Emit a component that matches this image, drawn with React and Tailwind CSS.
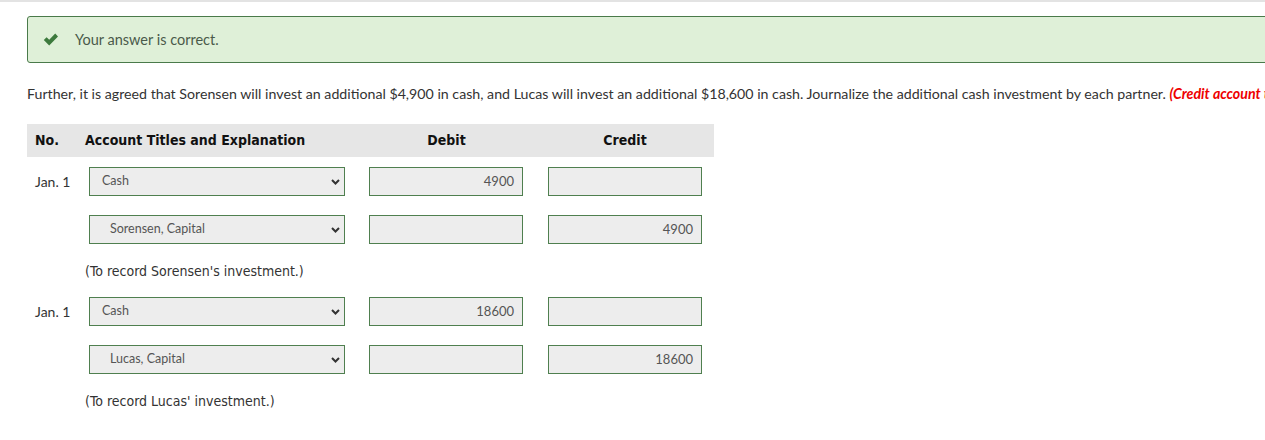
const entries = [
  {
    lines: [
      { date: 'Jan. 1', account: 'Cash', indent: false, debit: '4900', credit: '' },
      { date: '', account: 'Sorensen, Capital', indent: true, debit: '', credit: '4900' },
    ],
    note: "(To record Sorensen's investment.)",
  },
  {
    lines: [
      { date: 'Jan. 1', account: 'Cash', indent: false, debit: '18600', credit: '' },
      { date: '', account: 'Lucas, Capital', indent: true, debit: '', credit: '18600' },
    ],
    note: "(To record Lucas' investment.)",
  },
];

const Chevron = () => (
  <svg width="9" height="6" viewBox="0 0 9 6" className="text-[#333]">
    <path d="M1 1l3.5 3.5L8 1" stroke="currentColor" strokeWidth="2" fill="none" />
  </svg>
);

const AmountBox = ({ value }) => (
  <div className="mx-[12px] h-[29px] w-[154px] border border-[#4f7f4f] bg-[#ededed] px-[8px] flex items-center justify-end text-[13px] text-[#555]">
    {value}
  </div>
);

const App = () => {
  return (
    <div className="w-[1265px] h-[440px] overflow-hidden bg-white border-t-2 border-[#e3e3e3] font-['Lato','Liberation_Sans',sans-serif] text-[#333]">
      <div className="pl-[27px] pt-[14px]">
        <div className="h-[47px] w-[1300px] rounded-[3px] border border-[#4a7a4a] bg-[#dff0d8] flex items-center">
          <svg width="16" height="13" viewBox="0 0 16 13" className="ml-[15px]">
            <path d="M0.8 7l2.8-2.8L6.2 6.8 12.2 0.6 15 3.4 6.2 12.4z" fill="#3d7a3d" />
          </svg>
          <span className="ml-[16px] text-[14.5px] text-[#4a5a4a]">Your answer is correct.</span>
        </div>

        <p className="mt-[20px] whitespace-nowrap text-[14.2px] text-[#333]">
          Further, it is agreed that Sorensen will invest an additional $4,900 in cash, and Lucas will invest an additional $18,600 in cash. Journalize the additional cash investment by each partner.{' '}
          <span className="font-bold italic text-[#ee0000]">(Credit account titles are automatically indented when amount is entered. Do not indent manually.)</span>
        </p>

        <div className="mt-[20px] w-[687px]">
          <div className="flex h-[33px] items-center bg-[#e6e6e6] font-['DejaVu_Sans_Condensed','DejaVu_Sans',sans-serif] text-[14px] font-bold text-[#111]">
            <div className="w-[58px] pl-[8px]">No.</div>
            <div className="w-[272px]">Account Titles and Explanation</div>
            <div className="w-[179px] text-center">Debit</div>
            <div className="w-[178px] text-center">Credit</div>
          </div>

          <div className="pt-[10px]">
            {entries.map((entry, i) => (
              <div key={i}>
                <div className="flex flex-col gap-[19px]">
                  {entry.lines.map((r, j) => (
                    <div key={j} className="flex items-center h-[29px]">
                      <div className="w-[58px] pl-[8px] text-[14px] text-[#333]">{r.date}</div>
                      <div className="w-[272px]">
                        <div className="ml-[4px] h-[29px] w-[256px] border border-[#4f7f4f] bg-[#ededed] flex items-center justify-between pr-[4px]">
                          <span className={`text-[12.5px] text-[#555] ${r.indent ? 'pl-[20px]' : 'pl-[12px]'}`}>{r.account}</span>
                          <Chevron />
                        </div>
                      </div>
                      <div className="w-[179px]">
                        <AmountBox value={r.debit} />
                      </div>
                      <div className="w-[178px]">
                        <AmountBox value={r.credit} />
                      </div>
                    </div>
                  ))}
                </div>
                <div className="flex h-[53px] items-center pt-[1px]">
                  <div className="w-[58px]" />
                  <div className="font-['DejaVu_Sans_Condensed','DejaVu_Sans',sans-serif] text-[14px] text-[#333]">{entry.note}</div>
                </div>
              </div>
            ))}
          </div>
        </div>
      </div>
    </div>
  );
};

export default App;
